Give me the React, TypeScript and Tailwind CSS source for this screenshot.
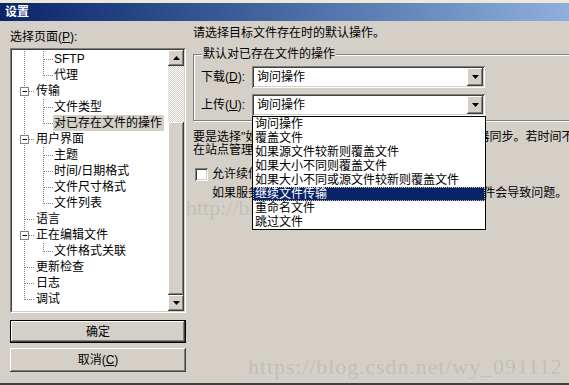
import React from 'react';

type TreeNode = {
  label: string;
  depth: 0 | 1;
  box?: boolean;
  rootHalf?: boolean;
  childHalf?: boolean;
  selected?: boolean;
};

const nodes: TreeNode[] = [
  { label: 'SFTP', depth: 1 },
  { label: '代理', depth: 1, childHalf: true },
  { label: '传输', depth: 0, box: true },
  { label: '文件类型', depth: 1 },
  { label: '对已存在文件的操作', depth: 1, childHalf: true, selected: true },
  { label: '用户界面', depth: 0, box: true },
  { label: '主题', depth: 1 },
  { label: '时间/日期格式', depth: 1 },
  { label: '文件尺寸格式', depth: 1 },
  { label: '文件列表', depth: 1, childHalf: true },
  { label: '语言', depth: 0 },
  { label: '正在编辑文件', depth: 0, box: true },
  { label: '文件格式关联', depth: 1, childHalf: true },
  { label: '更新检查', depth: 0 },
  { label: '日志', depth: 0 },
  { label: '调试', depth: 0, rootHalf: true },
];

const options = [
  '询问操作',
  '覆盖文件',
  '如果源文件较新则覆盖文件',
  '如果大小不同则覆盖文件',
  '如果大小不同或源文件较新则覆盖文件',
  '继续文件传输',
  '重命名文件',
  '跳过文件',
];

const raised =
  'shadow-[inset_-1px_-1px_#404040,inset_1px_1px_#ffffff,inset_-2px_-2px_#808080,inset_2px_2px_#d4d0c8]';
const sunken =
  'shadow-[inset_1px_1px_#808080,inset_-1px_-1px_#ffffff,inset_2px_2px_#404040,inset_-2px_-2px_#d4d0c8]';

function Connector({ node }: { node: TreeNode }) {
  const dot = { stroke: '#808080', strokeDasharray: '1 1', strokeWidth: 1 };
  if (node.depth === 0) {
    return (
      <svg width="24" height="16" className="shrink-0">
        <line x1="12.5" y1="0" x2="12.5" y2={node.rootHalf ? 9 : 16} {...dot} />
        {node.box ? (
          <>
            <line x1="17" y1="8.5" x2="23" y2="8.5" {...dot} />
            <rect x="8.5" y="4.5" width="8" height="8" fill="#fff" stroke="#808080" />
            <line x1="10.5" y1="8.5" x2="15" y2="8.5" stroke="#000" />
          </>
        ) : (
          <line x1="13" y1="8.5" x2="23" y2="8.5" {...dot} />
        )}
      </svg>
    );
  }
  return (
    <svg width="41" height="16" className="shrink-0">
      <line x1="12.5" y1="0" x2="12.5" y2="16" {...dot} />
      <line x1="31.5" y1="0" x2="31.5" y2={node.childHalf ? 9 : 16} {...dot} />
      <line x1="32" y1="8.5" x2="41" y2="8.5" {...dot} />
    </svg>
  );
}

function Arrow({ down }: { down?: boolean }) {
  return (
    <svg width="7" height="4" viewBox="0 0 7 4">
      <polygon points={down ? '0,0 7,0 3.5,4' : '0,4 7,4 3.5,0'} fill="#000" />
    </svg>
  );
}

function Combo({ children }: { children?: React.ReactNode }) {
  return (
    <div className={`relative flex h-[22px] w-[233px] items-center bg-white pl-[5px] ${sunken}`}>
      <span className="flex-1">询问操作</span>
      <div className={`mr-[2px] flex h-[18px] w-[16px] items-center justify-center bg-[#d4d0c8] ${raised}`}>
        <Arrow down />
      </div>
      {children}
    </div>
  );
}

export default function App() {
  return (
    <div className="relative flex h-[385px] w-[569px] flex-col overflow-hidden bg-[#d4d0c8] font-['Liberation_Sans','Noto_Sans_CJK_SC',sans-serif] text-[12px] text-black">
      <div className="h-[3px] bg-[#ece9d8]" />
      <div className="flex h-[18px] items-center bg-gradient-to-r from-[#0a246a] to-[#8fb0dd] pl-[5px] font-bold text-white">
        设置
      </div>

      <div className="flex flex-1 overflow-hidden">
        {/* left: page tree */}
        <div className="flex w-[193px] shrink-0 flex-col pl-[10px] pr-[7px] pt-[8px]">
          <div className="h-[16px] leading-[16px]">
            选择页面(<span className="underline">P</span>):
          </div>
          <div className="mt-[3px] h-[265px] border border-b-white border-l-[#808080] border-r-white border-t-[#808080]">
            <div className="flex h-full border border-b-[#d4d0c8] border-l-[#404040] border-r-[#d4d0c8] border-t-[#404040]">
              <div className="flex-1 bg-white pt-px">
                {nodes.map((n) => (
                  <div key={n.label} className="flex h-[16px] items-center leading-[16px]">
                    <Connector node={n} />
                    <span className={n.selected ? 'bg-[#d4d0c8] pl-px pr-[2px]' : n.depth === 1 ? 'pl-px' : ''}>
                      {n.label}
                    </span>
                  </div>
                ))}
              </div>
              <div className="flex w-[16px] flex-col">
                <div className={`flex h-[16px] items-center justify-center ${raised}`}>
                  <Arrow />
                </div>
                <div className="h-[56px] bg-[image:repeating-conic-gradient(#d4d0c8_0%_25%,#ffffff_0%_50%)] bg-[length:2px_2px]" />
                <div className={`flex-1 ${raised}`} />
                <div className={`flex h-[16px] items-center justify-center ${raised}`}>
                  <Arrow down />
                </div>
              </div>
            </div>
          </div>
          <button className={`mt-[7px] h-[23px] border border-black ${raised}`}>确定</button>
          <button className={`mt-[5px] h-[24px] ${raised}`}>
            取消(<span className="underline">C</span>)
          </button>
        </div>

        {/* right: options */}
        <div className="flex flex-1 flex-col overflow-hidden pt-[5px]">
          <div className="h-[14px] whitespace-nowrap leading-[14px]">请选择目标文件存在时的默认操作。</div>

          <div className="mt-[14px] flex w-[400px] shrink-0 flex-col border border-[#808080] pl-[7px] shadow-[inset_1px_1px_#ffffff,1px_1px_#ffffff]">
            <span className="-mt-[8px] ml-px self-start bg-[#d4d0c8] px-px leading-[14px]">默认对已存在文件的操作</span>
            <div className="mt-[5px] flex items-center">
              <span className="w-[51px]">
                下载(<span className="underline">D</span>):
              </span>
              <Combo />
            </div>
            <div className="mb-[4px] mt-[6px] flex items-center">
              <span className="w-[51px]">
                上传(<span className="underline">U</span>):
              </span>
              <Combo>
                <div className="absolute left-0 top-full z-10 w-[234px] border border-black bg-white">
                  {options.map((o) => (
                    <div
                      key={o}
                      className={
                        o === '继续文件传输'
                          ? 'h-[14px] border border-dotted border-[#c8c090] bg-[#0a246a] pl-px leading-[12px] text-white'
                          : 'h-[14px] whitespace-nowrap pl-[2px] leading-[14px]'
                      }
                    >
                      {o}
                    </div>
                  ))}
                </div>
              </Combo>
            </div>
          </div>

          <div className="mt-[10px] whitespace-nowrap leading-[13px]">
            <div>要是选择"如果源文件较新则覆盖文件"，请确保两台机器同步。若时间不同，</div>
            <div>在站点管理器中设置时区偏移。</div>
          </div>

          <div className="mt-[9px] flex h-[16px] items-center">
            <div className={`ml-[2px] h-[13px] w-[13px] bg-white ${sunken}`} />
            <span className="ml-[4px] whitespace-nowrap">允许续传ASCII文件</span>
          </div>
          <div className="mt-[4px] whitespace-nowrap pl-[19px] leading-[14px]">
            如果服务器使用不同的行结束符格式，续传ASCII文件会导致问题。
          </div>
        </div>
      </div>

      <div className="h-[2px] bg-[#404040]" />

      {/* watermarks and pointer */}
      <div className="pointer-events-none absolute left-[186px] top-[191px] font-['Liberation_Serif',serif] text-[22px] text-[rgba(150,150,150,0.3)]">
        http://blog.csdn.net/
      </div>
      <div className="pointer-events-none absolute left-[248px] top-[350px] font-['Liberation_Serif',serif] text-[22px] tracking-[0.9px] text-[rgba(150,150,150,0.3)]">
        https://blog.csdn.net/wy_091112
      </div>
      <svg className="pointer-events-none absolute left-[473px] top-[195px]" width="13" height="21" viewBox="0 0 13 21">
        <path d="M0.5 0.5 L0.5 16.5 L4.5 12.5 L7.5 19.5 L9.5 18.5 L6.5 11.5 L11.5 11.5 Z" fill="#fff" stroke="#000" />
      </svg>
    </div>
  );
}
